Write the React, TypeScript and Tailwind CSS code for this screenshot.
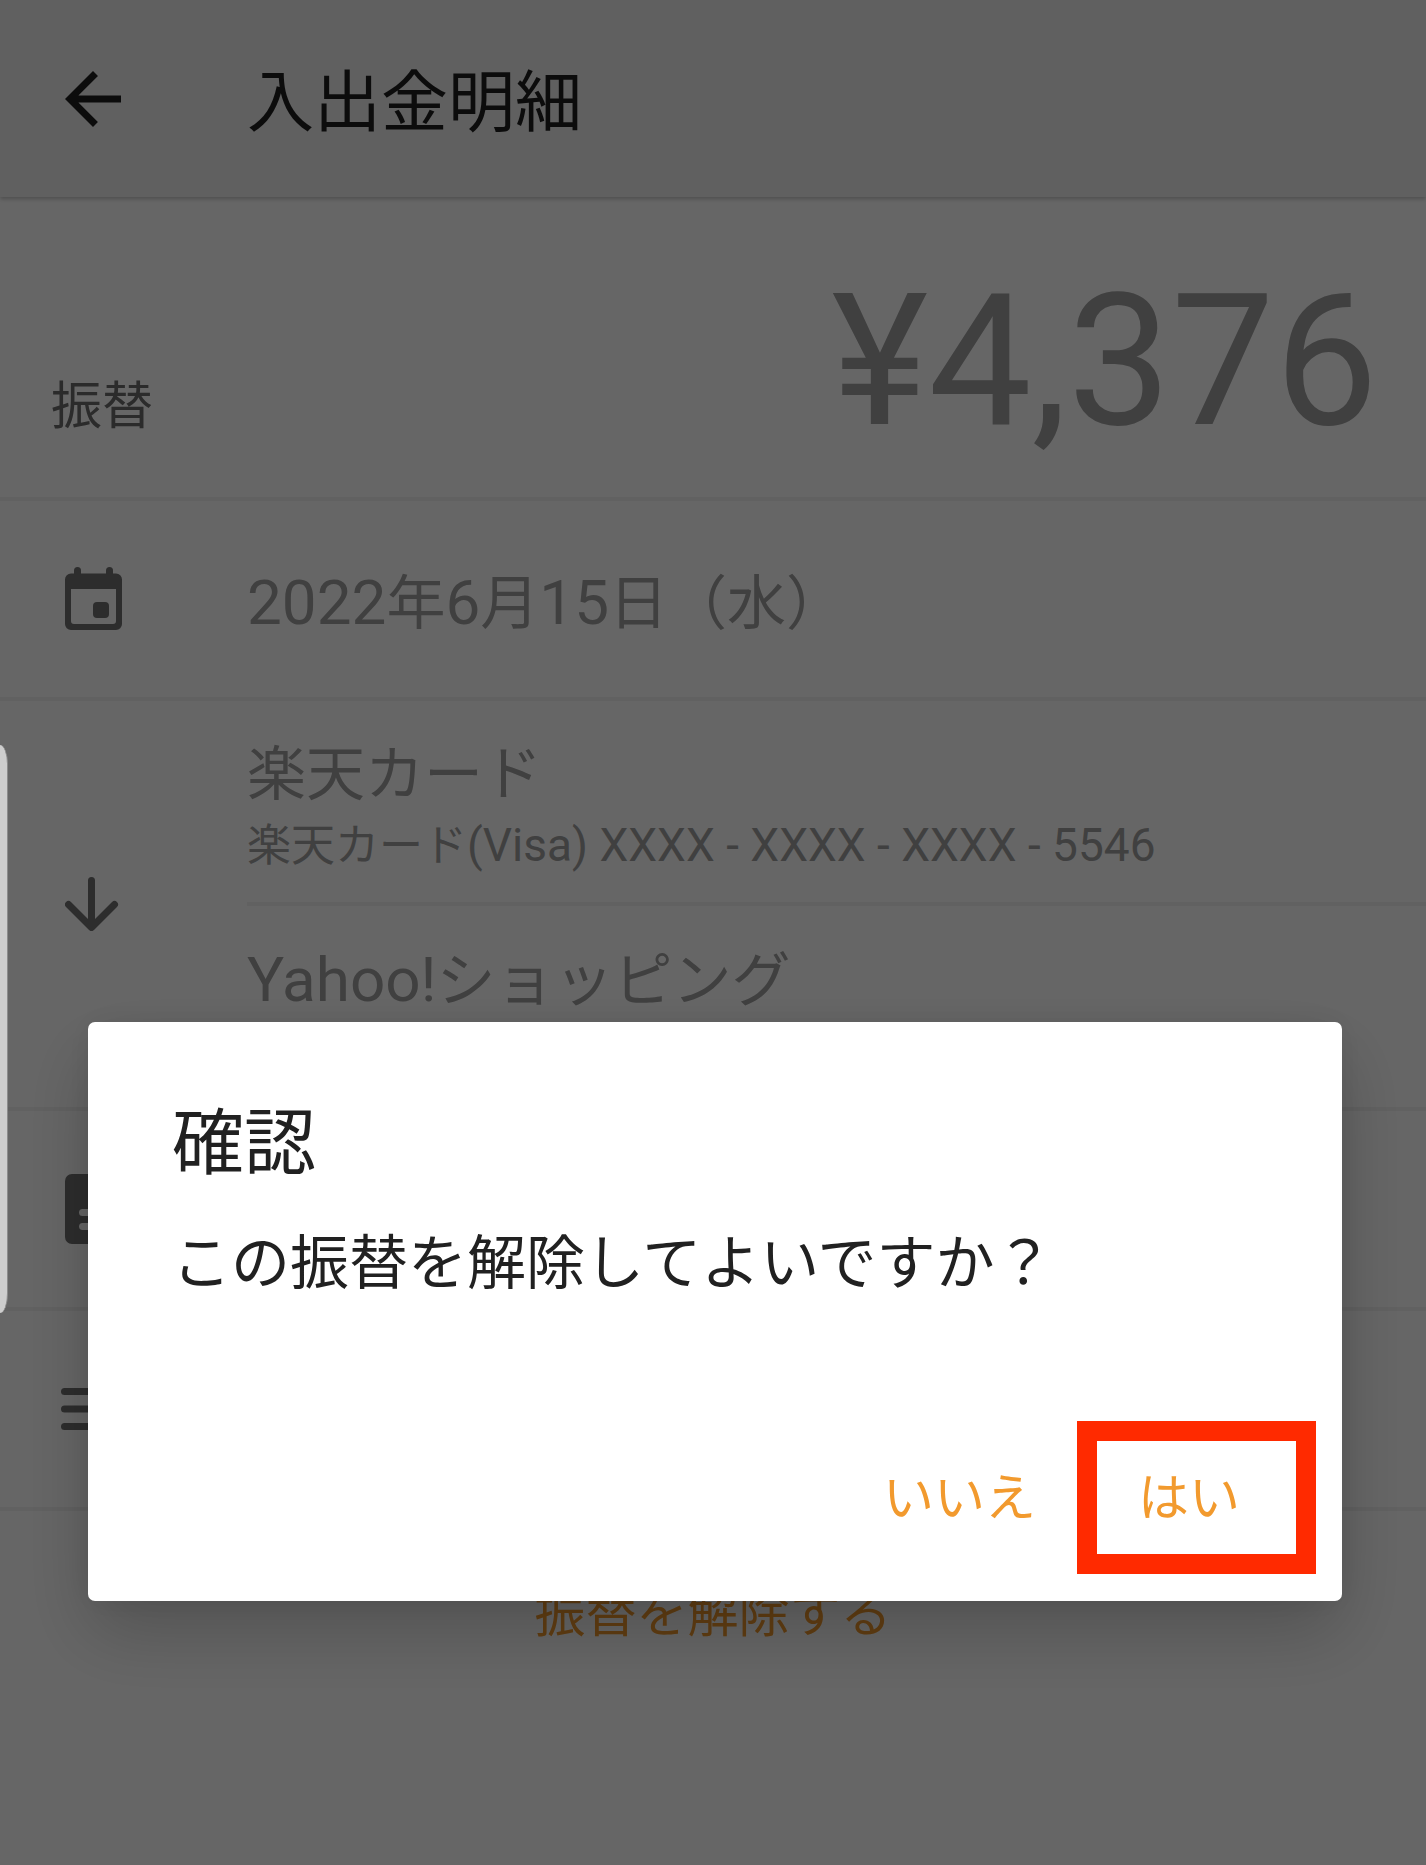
import type { ReactNode } from "react";

// Roboto sits a little larger than the Japanese glyphs beside it
function Latin({ size = "lg", children }: { size?: "lg" | "sm"; children: ReactNode }) {
  return <span className={size === "lg" ? "text-[62px]" : "text-[46px]"}>{children}</span>;
}

function BackIcon() {
  return (
    <svg viewBox="0 0 24 24" className="size-[84px]" fill="currentColor" aria-hidden="true">
      <path d="M20 11H7.83l5.59-5.59L12 4l-8 8 8 8 1.41-1.41L7.83 13H20v-2z" />
    </svg>
  );
}

function CalendarIcon() {
  return (
    <svg viewBox="0 0 57 64" className="w-[57px] h-[64px]" fill="currentColor" aria-hidden="true">
      <rect x="9" y="0" width="7" height="14" rx="3.5" />
      <rect x="41" y="0" width="7" height="14" rx="3.5" />
      <path
        fillRule="evenodd"
        d="M6 6.500h45a6 6 0 0 1 6 6V57a6 6 0 0 1-6 6H6a6 6 0 0 1-6-6V12.500a6 6 0 0 1 6-6zM6 22v32a3 3 0 0 0 3 3h39a3 3 0 0 0 3-3V22z"
      />
      <rect x="28" y="35" width="16" height="16" rx="4" />
    </svg>
  );
}

function DownIcon() {
  return (
    <svg
      viewBox="0 0 54 54"
      className="size-[54px]"
      fill="none"
      stroke="currentColor"
      strokeWidth="7"
      strokeLinecap="round"
      strokeLinejoin="round"
      aria-hidden="true"
    >
      <path d="M26.500 3.500V50M3.500 27.500l23 23 23-23" />
    </svg>
  );
}

function NoteIcon() {
  return (
    <svg viewBox="0 0 56 70" className="w-[56px] h-[70px]" fill="currentColor" aria-hidden="true">
      <path
        fillRule="evenodd"
        d="M7 0h29l20 20v43a7 7 0 0 1-7 7H7a7 7 0 0 1-7-7V7a7 7 0 0 1 7-7zM17.500 35a3.500 3.500 0 0 0 0 7h21a3.500 3.500 0 0 0 0-7zM17.500 49a3.500 3.500 0 0 0 0 7h21a3.500 3.500 0 0 0 0-7z"
      />
    </svg>
  );
}

function ListIcon() {
  return (
    <svg viewBox="0 0 63 42" className="w-[63px] h-[42px] -ml-1" fill="currentColor" aria-hidden="true">
      <rect width="63" height="7" rx="3.5" />
      <rect y="17.5" width="63" height="7" rx="3.5" />
      <rect y="35" width="63" height="7" rx="3.5" />
    </svg>
  );
}

function Row({ icon, children }: { icon: ReactNode; children?: ReactNode }) {
  return (
    <div className="flex min-h-[200px] border-b-4 border-[#f2f2f2]">
      <div className="w-[182px] ml-[65px] shrink-0 flex items-center text-[#707070]">{icon}</div>
      <div className="flex-1 flex flex-col justify-center">{children}</div>
    </div>
  );
}

export default function App() {
  return (
    <div className="min-h-screen bg-white text-[#a0a0a0] font-[Roboto,'Noto_Sans_CJK_JP',sans-serif]">
      {/* App bar */}
      <header className="h-[197px] flex items-center bg-[#f0f0f0] text-[#1e1e1e] pl-[51px] shadow-[0_2px_4px_rgba(0,0,0,0.24)]">
        <button type="button" aria-label="戻る">
          <BackIcon />
        </button>
        <h1 className="ml-[112px] pt-2 text-[67px] leading-[80px]">入出金明細</h1>
      </header>

      <main>
        <div className="h-[304px] flex items-baseline justify-between pl-[51px] pr-12 pt-14 border-b-4 border-[#f2f2f2]">
          <span className="text-[51px] text-[#6b6b6b]">振替</span>
          <span className="text-[184px] leading-[216px]">¥4,376</span>
        </div>

        <Row icon={<CalendarIcon />}>
          <p className="pt-2 text-[59px] leading-[80px]">
            <Latin>2022</Latin>年<Latin>6</Latin>月<Latin>15</Latin>日（水）
          </p>
        </Row>

        <Row icon={<DownIcon />}>
          <div className="h-[205px] pt-[34px] border-b-4 border-[#f2f2f2]">
            <p className="text-[59px] leading-[80px]">楽天カード</p>
            <p className="text-[44px] leading-[60px]">
              楽天カード<Latin size="sm">(Visa) XXXX - XXXX - XXXX - 5546</Latin>
            </p>
          </div>
          <div className="h-[201px] pt-[34px]">
            <p className="text-[59px] leading-[80px]">
              <Latin>Yahoo!</Latin>ショッピング
            </p>
          </div>
        </Row>

        <Row icon={<NoteIcon />} />
        <Row icon={<ListIcon />} />

        <button type="button" className="block mx-auto mt-16 text-[51px] leading-[80px] text-[#f29a2e]">
          振替を解除する
        </button>
      </main>

      {/* Confirm dialog */}
      <div className="fixed inset-0 flex items-end bg-black/60 pl-[88px] pr-[84px] pb-[264px]">
        <div
          role="dialog"
          aria-modal="true"
          aria-labelledby="confirm-title"
          className="relative w-full rounded-[7px] bg-white px-[84px] pt-[78px] pb-[62px] text-[#212121] shadow-[0_32px_72px_rgba(0,0,0,0.2),0_0_32px_rgba(0,0,0,0.08)]"
        >
          <h2 id="confirm-title" className="text-[72px] leading-[88px]">
            確認
          </h2>
          <p className="mt-8 text-[59px] leading-[88px]">この振替を解除してよいですか？</p>
          <div className="mt-[151px] flex justify-end gap-[102px] pr-[18px] text-[51px] leading-[80px] text-[#f29a2e]">
            <button type="button">いいえ</button>
            <button type="button">はい</button>
          </div>
          <div className="absolute right-[26px] bottom-[27px] w-[239px] h-[153px] border-20 border-[#ff2a00] pointer-events-none" />
        </div>
      </div>

      {/* Edge panel handle */}
      <div className="fixed left-0 top-[745px] w-[8px] h-[568px] [border-radius:0_8px_8px_0/0_20px_20px_0] border-r border-[#8c8c8c] bg-[#cdcdcd]" />
    </div>
  );
}
